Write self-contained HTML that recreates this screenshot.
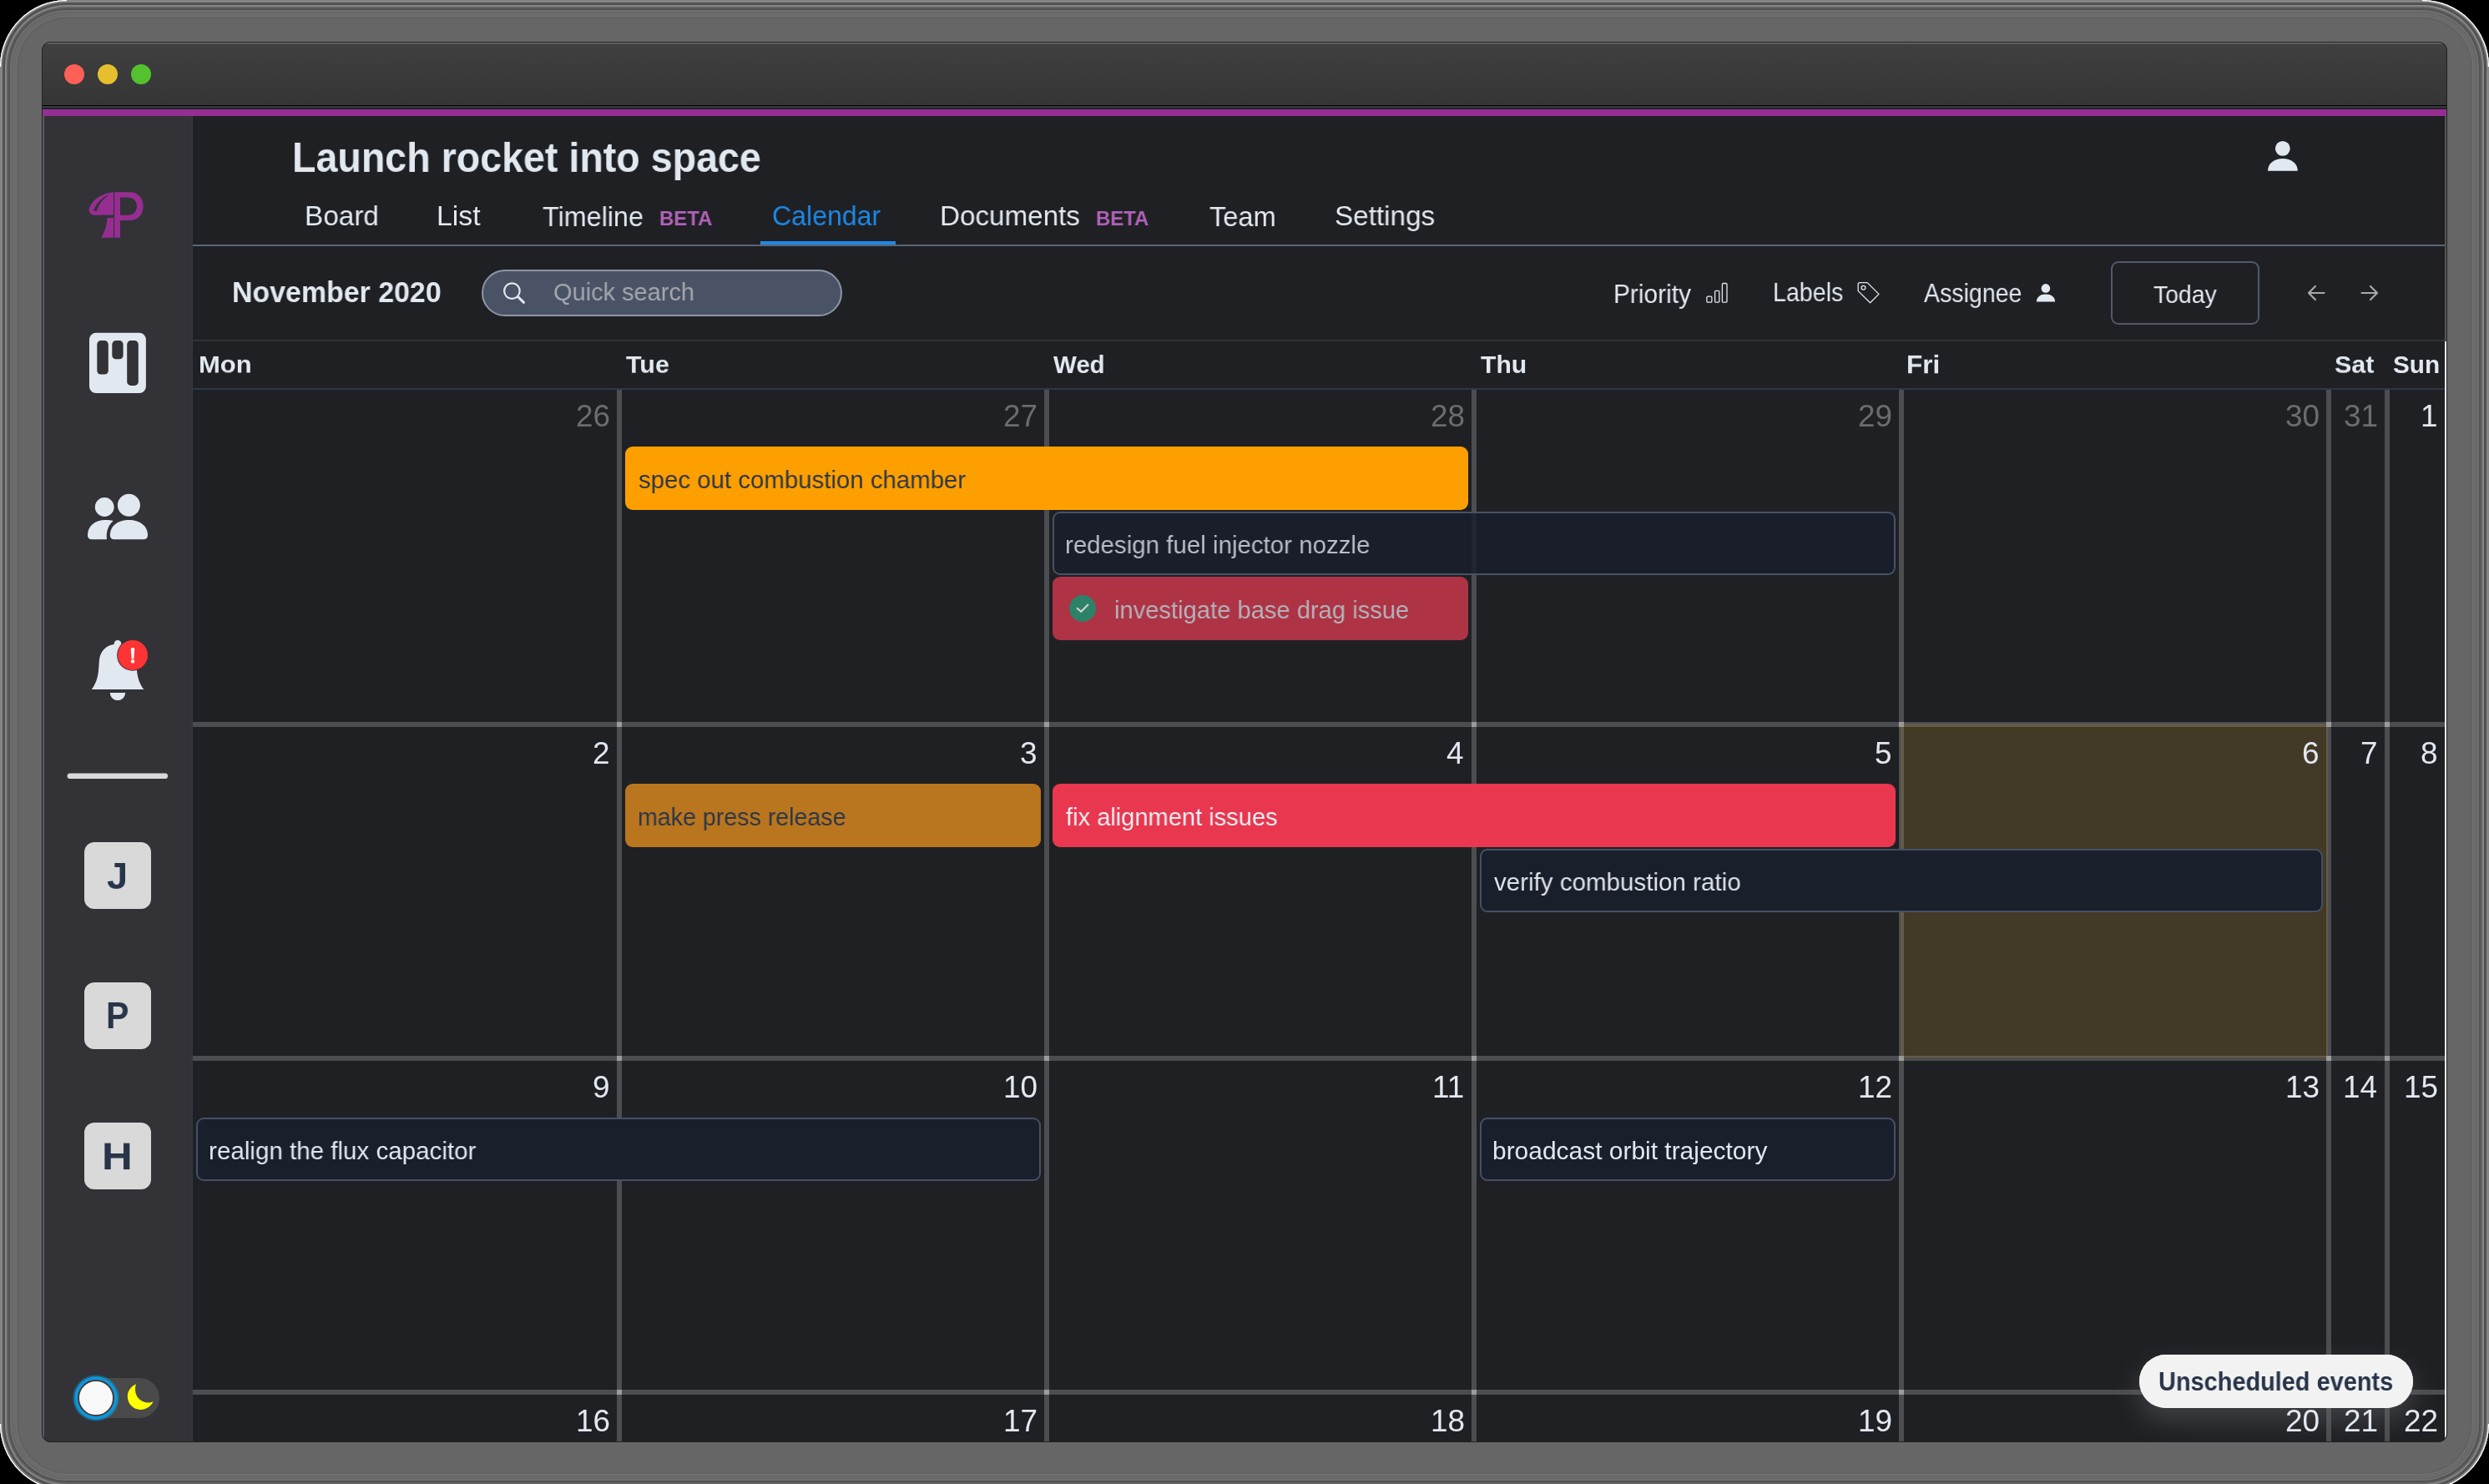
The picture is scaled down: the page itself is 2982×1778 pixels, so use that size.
<!DOCTYPE html>
<html><head><meta charset="utf-8"><style>
html,body{margin:0;padding:0;background:#000;width:2982px;height:1778px;overflow:hidden}
.b{position:absolute;box-sizing:border-box}
.t{position:absolute;white-space:pre;font-family:"Liberation Sans", sans-serif;transform-origin:0 0;z-index:2;will-change:transform}
</style></head><body>
<div class="b" style="left:0;top:0;width:2982px;height:1786px;border-radius:80px;background:#666;box-shadow:inset 0 0 0 3px #848484, inset 0 0 0 6px #525252, inset 0 0 0 8px #858585, inset 0 0 0 10px #636363, inset 0 0 0 12px #525252, inset 0 0 0 14.5px #6e6e6e, inset 0 0 0 15.5px #606060, inset 0 0 0 17.5px #6e6e6e, inset 0 0 0 18.5px #646464, inset 0 0 0 20px #727272, inset 0 0 0 23px #636363"></div><svg class="b" style="left:0;top:0;z-index:0" width="2982" height="1778" viewBox="0 0 2982 1778"><g fill="none" stroke="#ffffff" stroke-width="1.3"><path d="M0.6,80 A79.4,79.4 0 0 1 80,0.6"/><path d="M2902,0.6 A79.4,79.4 0 0 1 2981.4,80"/><path d="M0.6,1706 A79.4,79.4 0 0 0 80,1785.4"/><path d="M2981.4,1706 A79.4,79.4 0 0 1 2902,1785.4"/></g></svg><div class="b" style="left:50px;top:50px;width:2882px;height:1678px;border-radius:10px;background:#1f2024;border:1px solid #222;overflow:hidden"><div class="b" style="left:-51px;top:-51px;width:2982px;height:1778px"><div class="b" style="left:51px;top:51px;width:2880px;height:75px;background:linear-gradient(#404040,#353535)"></div><div class="b" style="left:51px;top:51px;width:2880px;height:1px;background:#6a6a6a"></div><div class="b" style="left:51px;top:52px;width:2880px;height:1px;background:#555"></div><div class="b" style="left:50px;top:126px;width:2882px;height:1px;background:#000"></div><div class="b" style="left:50px;top:127px;width:2882px;height:2px;background:#3a3b3f"></div><div class="b" style="left:50px;top:129px;width:2882px;height:2px;background:#222326"></div><div class="b" style="left:50px;top:131px;width:2882px;height:8px;background:#962e92"></div><div class="b" style="left:77px;top:77px;width:24px;height:24px;border-radius:50%;background:#fe5f57"></div><div class="b" style="left:117px;top:77px;width:24px;height:24px;border-radius:50%;background:#e6bf2e"></div><div class="b" style="left:157px;top:77px;width:24px;height:24px;border-radius:50%;background:#54c22f"></div><div class="b" style="left:50px;top:139px;width:179px;height:1589px;background:#323237"></div><div class="b" style="left:51px;top:139px;width:2px;height:1589px;background:#5c5b62"></div><div class="b" style="left:229px;top:139px;width:2px;height:1589px;background:#2d3748"></div><span class="t" style="left:350.34px;top:163.12px;font-size:48.20px;line-height:48.20px;font-weight:700;color:#e2e8f0;transform:scale(0.9668,1.0344);">Launch rocket into space</span><span class="t" style="left:365.33px;top:242.30px;font-size:33.55px;line-height:33.55px;font-weight:400;color:#e2e8f0;transform:scale(0.9935,1.0065);">Board</span><span class="t" style="left:522.99px;top:242.30px;font-size:33.82px;line-height:33.82px;font-weight:400;color:#e2e8f0;transform:scale(1.0016,0.9984);">List</span><span class="t" style="left:649.75px;top:242.30px;font-size:33.04px;line-height:33.04px;font-weight:400;color:#e2e8f0;transform:scale(0.9786,1.0219);">Timeline</span><span class="t" style="left:925.40px;top:242.30px;font-size:32.91px;line-height:32.91px;font-weight:400;color:#1e88e5;transform:scale(0.9747,1.0260);">Calendar</span><span class="t" style="left:1126.34px;top:242.30px;font-size:33.48px;line-height:33.48px;font-weight:400;color:#e2e8f0;transform:scale(0.9915,1.0085);">Documents</span><span class="t" style="left:1449.35px;top:242.30px;font-size:33.19px;line-height:33.19px;font-weight:400;color:#e2e8f0;transform:scale(0.9830,1.0173);">Team</span><span class="t" style="left:1598.84px;top:242.30px;font-size:33.53px;line-height:33.53px;font-weight:400;color:#e2e8f0;transform:scale(0.9928,1.0072);">Settings</span><span class="t" style="left:790.22px;top:250.06px;font-size:24.30px;line-height:24.30px;font-weight:700;color:#b062b8;transform:scale(0.9862,1.0140);">BETA</span><span class="t" style="left:1313.33px;top:250.06px;font-size:24.28px;line-height:24.28px;font-weight:700;color:#b062b8;transform:scale(0.9854,1.0149);">BETA</span><div class="b" style="left:231px;top:293px;width:2698px;height:2px;background:#5a6578"></div><div class="b" style="left:911px;top:289px;width:162px;height:4px;background:#1e88e5"></div><svg class="b" style="left:2700px;top:160px" width="60" height="50" viewBox="2700 160 60 50"><circle cx="2734.8" cy="177.9" r="8.9" fill="#e2e8f0"/><path d="M2717,204.7 C2717,195.5 2725,190 2734.9,190 C2744.8,190 2752.8,195.5 2752.8,204.7 Z" fill="#e2e8f0"/></svg><span class="t" style="left:277.62px;top:333.43px;font-size:34.35px;line-height:34.35px;font-weight:700;color:#e2e8f0;transform:scale(0.9876,1.0125);">November 2020</span><div class="b" style="left:577px;top:323px;width:432px;height:56px;background:#4a5366;border:2px solid #8e95a3;border-radius:28px;box-sizing:border-box"></div><svg class="b" style="left:590px;top:330px" width="50" height="45" viewBox="590 330 50 45"><circle cx="613.4" cy="348.6" r="9.3" fill="none" stroke="#e2e8f0" stroke-width="2.2"/><line x1="620.5" y1="355.5" x2="627.5" y2="362.3" stroke="#e2e8f0" stroke-width="3" stroke-linecap="round"/></svg><span class="t" style="left:662.85px;top:336.49px;font-size:29.19px;line-height:29.19px;font-weight:400;color:#a3a6ad;transform:scale(0.9923,1.0078);">Quick search</span><span class="t" style="left:1933.11px;top:335.51px;font-size:30.51px;line-height:30.51px;font-weight:400;color:#e2e8f0;transform:scale(0.9791,1.0214);">Priority</span><span class="t" style="left:2123.71px;top:335.33px;font-size:29.50px;line-height:29.50px;font-weight:400;color:#e2e8f0;transform:scale(0.9692,1.0318);">Labels</span><span class="t" style="left:2304.50px;top:335.51px;font-size:29.83px;line-height:29.83px;font-weight:400;color:#e2e8f0;transform:scale(0.9572,1.0447);">Assignee</span><svg class="b" style="left:2040px;top:334px" width="440" height="34" viewBox="2040 334 440 34"><g fill="none" stroke="#e2e8f0" stroke-width="1.3"><rect x="2044.9" y="355.2" width="6" height="7" rx="1.3"/><rect x="2054.6" y="348.3" width="5.2" height="13.9" rx="1.3"/><rect x="2063.4" y="339.5" width="5.6" height="22.7" rx="1.3"/><path d="M2226.2,340.6 Q2226.2,338.6 2228.2,338.6 L2237.2,338.6 L2251,352.4 L2240.6,362.8 L2226.2,348.6 Z" stroke-linejoin="round"/><circle cx="2232.5" cy="344.8" r="2.4"/></g><circle cx="2450.9" cy="345.4" r="5.3" fill="#e2e8f0"/><path d="M2439.9,361.5 C2439.9,356 2444.5,352.6 2451,352.6 C2457.5,352.6 2462.1,356 2462.1,361.5 Z" fill="#e2e8f0"/></svg><div class="b" style="left:2529px;top:313px;width:178px;height:76px;border:2px solid #4f5a6b;border-radius:9px;box-sizing:border-box"></div><span class="t" style="left:2580.33px;top:337.97px;font-size:28.98px;line-height:28.98px;font-weight:400;color:#e2e8f0;transform:scale(0.9804,1.0200);">Today</span><svg class="b" style="left:2755px;top:335px" width="105" height="32" viewBox="2755 335 105 32"><g fill="none" stroke="#a9a9a9" stroke-width="2.2" stroke-linecap="round" stroke-linejoin="round"><path d="M2784.5,351 L2766,351 M2773.9,343 L2766,351 L2773.9,359"/><path d="M2829.5,351 L2848,351 M2840,343 L2848,351 L2840,359"/></g></svg><div class="b" style="left:231px;top:407px;width:2698px;height:2px;background:#313236"></div><div class="b" style="left:231px;top:465px;width:2698px;height:2px;background:#2d3748"></div><span class="t" style="left:237.63px;top:422.25px;font-size:30.34px;line-height:30.34px;font-weight:700;color:#e2e8f0;transform:scale(1.0212,0.9792);">Mon</span><span class="t" style="left:750.10px;top:422.25px;font-size:30.09px;line-height:30.09px;font-weight:700;color:#e2e8f0;transform:scale(1.0129,0.9873);">Tue</span><span class="t" style="left:1262.20px;top:422.25px;font-size:29.58px;line-height:29.58px;font-weight:700;color:#e2e8f0;transform:scale(0.9957,1.0043);">Wed</span><span class="t" style="left:1773.70px;top:422.25px;font-size:29.91px;line-height:29.91px;font-weight:700;color:#e2e8f0;transform:scale(1.0068,0.9933);">Thu</span><span class="t" style="left:2283.79px;top:422.25px;font-size:30.63px;line-height:30.63px;font-weight:700;color:#e2e8f0;transform:scale(1.0310,0.9700);">Fri</span><span class="t" style="left:2796.68px;top:422.25px;font-size:30.12px;line-height:30.12px;font-weight:700;color:#e2e8f0;transform:scale(1.0137,0.9865);">Sat</span><span class="t" style="left:2866.61px;top:422.25px;font-size:29.72px;line-height:29.72px;font-weight:700;color:#e2e8f0;transform:scale(1.0002,0.9998);">Sun</span><div class="b" style="left:2277px;top:867px;width:512px;height:400px;background:rgba(178,140,52,0.24);z-index:2"></div><div class="b" style="left:739px;top:467px;width:6px;height:1261px;background:rgba(255,255,255,0.205)"></div><div class="b" style="left:1251px;top:467px;width:6px;height:1261px;background:rgba(255,255,255,0.205)"></div><div class="b" style="left:1763px;top:467px;width:6px;height:1261px;background:rgba(255,255,255,0.205)"></div><div class="b" style="left:2275px;top:467px;width:6px;height:1261px;background:rgba(255,255,255,0.205)"></div><div class="b" style="left:2787px;top:467px;width:6px;height:1261px;background:rgba(255,255,255,0.205)"></div><div class="b" style="left:2857px;top:467px;width:6px;height:1261px;background:rgba(255,255,255,0.205)"></div><div class="b" style="left:231px;top:865px;width:2698px;height:6px;background:rgba(255,255,255,0.205)"></div><div class="b" style="left:739px;top:865px;width:6px;height:6px;background:rgba(255,255,255,0.3)"></div><div class="b" style="left:1251px;top:865px;width:6px;height:6px;background:rgba(255,255,255,0.3)"></div><div class="b" style="left:1763px;top:865px;width:6px;height:6px;background:rgba(255,255,255,0.3)"></div><div class="b" style="left:2275px;top:865px;width:6px;height:6px;background:rgba(255,255,255,0.3)"></div><div class="b" style="left:2787px;top:865px;width:6px;height:6px;background:rgba(255,255,255,0.3)"></div><div class="b" style="left:2857px;top:865px;width:6px;height:6px;background:rgba(255,255,255,0.3)"></div><div class="b" style="left:231px;top:1265px;width:2698px;height:6px;background:rgba(255,255,255,0.205)"></div><div class="b" style="left:739px;top:1265px;width:6px;height:6px;background:rgba(255,255,255,0.3)"></div><div class="b" style="left:1251px;top:1265px;width:6px;height:6px;background:rgba(255,255,255,0.3)"></div><div class="b" style="left:1763px;top:1265px;width:6px;height:6px;background:rgba(255,255,255,0.3)"></div><div class="b" style="left:2275px;top:1265px;width:6px;height:6px;background:rgba(255,255,255,0.3)"></div><div class="b" style="left:2787px;top:1265px;width:6px;height:6px;background:rgba(255,255,255,0.3)"></div><div class="b" style="left:2857px;top:1265px;width:6px;height:6px;background:rgba(255,255,255,0.3)"></div><div class="b" style="left:231px;top:1665px;width:2698px;height:6px;background:rgba(255,255,255,0.205)"></div><div class="b" style="left:739px;top:1665px;width:6px;height:6px;background:rgba(255,255,255,0.3)"></div><div class="b" style="left:1251px;top:1665px;width:6px;height:6px;background:rgba(255,255,255,0.3)"></div><div class="b" style="left:1763px;top:1665px;width:6px;height:6px;background:rgba(255,255,255,0.3)"></div><div class="b" style="left:2275px;top:1665px;width:6px;height:6px;background:rgba(255,255,255,0.3)"></div><div class="b" style="left:2787px;top:1665px;width:6px;height:6px;background:rgba(255,255,255,0.3)"></div><div class="b" style="left:2857px;top:1665px;width:6px;height:6px;background:rgba(255,255,255,0.3)"></div><div class="b" style="left:2929px;top:409px;width:2px;height:1319px;background:#e8e8e8"></div><div class="b" style="left:2929px;top:139px;width:2px;height:270px;background:#555"></div><span class="t" style="left:689.52px;top:481.40px;font-size:36.90px;line-height:36.90px;font-weight:400;color:#6b6c71;transform:scale(1)">26</span><span class="t" style="left:1201.89px;top:481.40px;font-size:36.90px;line-height:36.90px;font-weight:400;color:#6b6c71;transform:scale(1)">27</span><span class="t" style="left:1713.52px;top:481.40px;font-size:36.90px;line-height:36.90px;font-weight:400;color:#6b6c71;transform:scale(1)">28</span><span class="t" style="left:2225.52px;top:481.40px;font-size:36.90px;line-height:36.90px;font-weight:400;color:#6b6c71;transform:scale(1)">29</span><span class="t" style="left:2737.52px;top:481.40px;font-size:36.90px;line-height:36.90px;font-weight:400;color:#6b6c71;transform:scale(1)">30</span><span class="t" style="left:2807.89px;top:481.40px;font-size:36.90px;line-height:36.90px;font-weight:400;color:#6b6c71;transform:scale(1)">31</span><span class="t" style="left:2900.18px;top:481.40px;font-size:36.90px;line-height:36.90px;font-weight:400;color:#e2e8f0;transform:scale(1)">1</span><span class="t" style="left:710.18px;top:885.40px;font-size:36.90px;line-height:36.90px;font-weight:400;color:#e2e8f0;transform:scale(1)">2</span><span class="t" style="left:1222.18px;top:885.40px;font-size:36.90px;line-height:36.90px;font-weight:400;color:#e2e8f0;transform:scale(1)">3</span><span class="t" style="left:1733.44px;top:885.40px;font-size:36.90px;line-height:36.90px;font-weight:400;color:#e2e8f0;transform:scale(1)">4</span><span class="t" style="left:2245.81px;top:885.40px;font-size:36.90px;line-height:36.90px;font-weight:400;color:#e2e8f0;transform:scale(1)">5</span><span class="t" style="left:2758.18px;top:885.40px;font-size:36.90px;line-height:36.90px;font-weight:400;color:#e2e8f0;transform:scale(1)">6</span><span class="t" style="left:2828.18px;top:885.40px;font-size:36.90px;line-height:36.90px;font-weight:400;color:#e2e8f0;transform:scale(1)">7</span><span class="t" style="left:2900.18px;top:885.40px;font-size:36.90px;line-height:36.90px;font-weight:400;color:#e2e8f0;transform:scale(1)">8</span><span class="t" style="left:710.18px;top:1285.40px;font-size:36.90px;line-height:36.90px;font-weight:400;color:#e2e8f0;transform:scale(1)">9</span><span class="t" style="left:1201.52px;top:1285.40px;font-size:36.90px;line-height:36.90px;font-weight:400;color:#e2e8f0;transform:scale(1)">10</span><span class="t" style="left:1716.47px;top:1285.40px;font-size:36.90px;line-height:36.90px;font-weight:400;color:#e2e8f0;transform:scale(1)">11</span><span class="t" style="left:2225.89px;top:1285.40px;font-size:36.90px;line-height:36.90px;font-weight:400;color:#e2e8f0;transform:scale(1)">12</span><span class="t" style="left:2737.52px;top:1285.40px;font-size:36.90px;line-height:36.90px;font-weight:400;color:#e2e8f0;transform:scale(1)">13</span><span class="t" style="left:2807.15px;top:1285.40px;font-size:36.90px;line-height:36.90px;font-weight:400;color:#e2e8f0;transform:scale(1)">14</span><span class="t" style="left:2879.52px;top:1285.40px;font-size:36.90px;line-height:36.90px;font-weight:400;color:#e2e8f0;transform:scale(1)">15</span><span class="t" style="left:689.52px;top:1685.40px;font-size:36.90px;line-height:36.90px;font-weight:400;color:#e2e8f0;transform:scale(1)">16</span><span class="t" style="left:1201.89px;top:1685.40px;font-size:36.90px;line-height:36.90px;font-weight:400;color:#e2e8f0;transform:scale(1)">17</span><span class="t" style="left:1713.52px;top:1685.40px;font-size:36.90px;line-height:36.90px;font-weight:400;color:#e2e8f0;transform:scale(1)">18</span><span class="t" style="left:2225.52px;top:1685.40px;font-size:36.90px;line-height:36.90px;font-weight:400;color:#e2e8f0;transform:scale(1)">19</span><span class="t" style="left:2737.52px;top:1685.40px;font-size:36.90px;line-height:36.90px;font-weight:400;color:#e2e8f0;transform:scale(1)">20</span><span class="t" style="left:2807.89px;top:1685.40px;font-size:36.90px;line-height:36.90px;font-weight:400;color:#e2e8f0;transform:scale(1)">21</span><span class="t" style="left:2879.89px;top:1685.40px;font-size:36.90px;line-height:36.90px;font-weight:400;color:#e2e8f0;transform:scale(1)">22</span><div class="b" style="left:749px;top:535px;width:1010px;height:76px;background:#fe9f00;border-radius:9px;z-index:3;"></div><span class="t" style="left:764.92px;top:559.62px;font-size:29.63px;line-height:29.63px;font-weight:400;color:#2d3748;transform:scale(0.9923,1.0077);z-index:5">spec out combustion chamber</span><div class="b" style="left:1261px;top:613px;width:1010px;height:76px;background:rgba(26,31,44,0.85);border-radius:9px;z-index:3;border:2px solid #485266;box-sizing:border-box;"></div><span class="t" style="left:1275.83px;top:637.62px;font-size:29.67px;line-height:29.67px;font-weight:400;color:#b9bdc5;transform:scale(0.9938,1.0062);z-index:5">redesign fuel injector nozzle</span><div class="b" style="left:1261px;top:691px;width:498px;height:76px;background:#ae3344;border-radius:9px;z-index:3;"></div><svg class="b" style="left:1281px;top:713px;z-index:4" width="32" height="32" viewBox="0 0 32 32"><circle cx="16" cy="16" r="16" fill="#2b8269"/><path d="M9,15.2 L14.2,19.8 L23,11" fill="none" stroke="#d6d6d6" stroke-width="2"/></svg><span class="t" style="left:1334.96px;top:715.62px;font-size:29.50px;line-height:29.50px;font-weight:400;color:#b3b3bb;transform:scale(0.9880,1.0122);z-index:5">investigate base drag issue</span><div class="b" style="left:749px;top:939px;width:498px;height:76px;background:#b9761e;border-radius:9px;z-index:3;"></div><span class="t" style="left:763.70px;top:963.62px;font-size:29.22px;line-height:29.22px;font-weight:400;color:#2d3748;transform:scale(0.9789,1.0216);z-index:5">make press release</span><div class="b" style="left:1261px;top:939px;width:1010px;height:76px;background:#e8374f;border-radius:9px;z-index:3;"></div><span class="t" style="left:1277.31px;top:963.62px;font-size:29.46px;line-height:29.46px;font-weight:400;color:#eceef2;transform:scale(0.9869,1.0133);z-index:5">fix alignment issues</span><div class="b" style="left:1773px;top:1017px;width:1010px;height:76px;background:#1a1f2c;border-radius:9px;z-index:3;border:2px solid #455064;box-sizing:border-box;"></div><span class="t" style="left:1790.30px;top:1041.62px;font-size:29.71px;line-height:29.71px;font-weight:400;color:#dfe3ea;transform:scale(0.9950,1.0050);z-index:5">verify combustion ratio</span><div class="b" style="left:235px;top:1339px;width:1012px;height:76px;background:#1a1f2c;border-radius:9px;z-index:3;border:2px solid #455064;box-sizing:border-box;"></div><span class="t" style="left:249.73px;top:1363.62px;font-size:29.71px;line-height:29.71px;font-weight:400;color:#e2e8f0;transform:scale(0.9953,1.0048);z-index:5">realign the flux capacitor</span><div class="b" style="left:1773px;top:1339px;width:498px;height:76px;background:#1a1f2c;border-radius:9px;z-index:3;border:2px solid #455064;box-sizing:border-box;"></div><span class="t" style="left:1788.20px;top:1363.62px;font-size:29.90px;line-height:29.90px;font-weight:400;color:#e2e8f0;transform:scale(1.0014,0.9986);z-index:5">broadcast orbit trajectory</span><div class="b" style="left:2563px;top:1623px;width:328px;height:64px;background:#f2f2f2;border-radius:32px;z-index:1;box-shadow:0 14px 30px 2px rgba(110,110,116,0.40)"></div><div class="b" style="left:2563px;top:1623px;width:328px;height:64px;background:#f2f2f2;border-radius:32px;z-index:6"></div><span class="t" style="left:2585.76px;top:1639.63px;font-size:29.67px;line-height:29.67px;font-weight:700;color:#283449;transform:scale(0.9748,1.0259);z-index:7">Unscheduled events</span><svg class="b" style="left:0;top:0;z-index:1" width="2982" height="1778" viewBox="0 0 2982 1778"><defs><filter id="blur1" x="-50%" y="-50%" width="200%" height="200%"><feGaussianBlur stdDeviation="1.2"/></filter></defs><g fill="#962e92"><path d="M137.1,230.2 L156,230.2 C165,230.2 171.6,237 171.6,247 C171.6,257 165,264 156,264 L144,264 L144,284.7 L137.1,284.7 Z M144,236.4 L144,257.8 L153,257.8 C159.5,257.8 164,253.5 164,247 C164,240.5 159.5,236.4 153,236.4 Z" fill-rule="evenodd"/><path d="M136,230.2 C124,230.5 112,238 107.5,248 C105.5,253 107.5,257.8 114,257.8 L136,257.4 Z M128.8,233.8 C120,238.5 114,245.5 112,252.7 L115.8,252.7 C118.5,245 122.5,239.5 129.3,234.6 Z" fill-rule="evenodd"/><path d="M128.5,260.9 L136,260.9 L136,284.7 L121.8,284.7 L121.8,283.5 C126,277 128,270 128.5,260.9 Z"/></g><rect x="107" y="398.8" width="67.9" height="72.2" rx="8" fill="#e2e8f0"/><g fill="#323237"><rect x="116.3" y="408.1" width="13.5" height="40.4" rx="4.5"/><rect x="134.3" y="408.1" width="13.3" height="22.2" rx="4.5"/><rect x="152.2" y="408.1" width="13.6" height="53.8" rx="4.5"/></g><g fill="#e2e8f0"><circle cx="125.2" cy="607.5" r="11.4"/><circle cx="154.4" cy="605.3" r="13.5"/><path d="M131.8,641.5 C131.8,630 141.5,623.1 154.4,623.1 C167.3,623.1 177,630 177,641.5 C177,644.5 175,646.2 172,646.2 L136.8,646.2 C133.8,646.2 131.8,644.5 131.8,641.5 Z"/><path d="M105,641.5 C105,630 114,623.1 126,623.1 C130,623.1 133,623.4 135.7,624 C130,629 127,636 127.9,646.2 L110,646.2 C107,646.2 105,644.5 105,641.5 Z"/></g><g fill="#e2e8f0"><circle cx="141" cy="771.2" r="4.3"/><path d="M141,771.5 C128,771.5 119.5,780 118.8,792 L118.2,801 C117.5,812 114.5,820 109.7,826 L172.3,826 C167.5,820 164.5,812 163.8,801 L163.2,792 C162.5,780 154,771.5 141,771.5 Z"/><path d="M131.8,829.9 L150.1,829.9 C150.1,835 146,839 141,839 C136,839 131.8,835 131.8,829.9 Z"/></g><circle cx="159" cy="784.9" r="18.9" fill="#323237"/><circle cx="159" cy="784.9" r="18" fill="#ff3333"/><path d="M156.8,777.5 Q156.8,776 159,776 Q161.2,776 161.2,777.5 L160.4,789.4 L157.6,789.4 Z" fill="#fff"/><circle cx="159" cy="792.4" r="2.2" fill="#fff"/><rect x="80.6" y="926.5" width="120.4" height="6.5" rx="3" fill="#d9d9d9"/><rect x="101" y="1009" width="80" height="80" rx="12" fill="#d9d9d9"/><rect x="101" y="1177" width="80" height="80" rx="12" fill="#d9d9d9"/><rect x="101" y="1345" width="80" height="80" rx="12" fill="#d9d9d9"/><rect x="100" y="1651" width="91" height="48" rx="24" fill="#4a4a4a"/><circle cx="115" cy="1675" r="26.6" fill="#0b98dc" filter="url(#blur1)"/><circle cx="115" cy="1675" r="21" fill="#f9f9f9" stroke="#443c3c" stroke-width="2"/><path d="M162.9,1658.3 C157,1661 152.8,1666.5 152.8,1673 C152.8,1681.8 159.8,1688.9 168.3,1688.9 C175,1688.9 181,1685 183.6,1679.3 C181.5,1680.2 179.5,1680.5 177.5,1680.5 C169,1680.5 162,1673.5 162,1665 C162,1662.5 162.3,1660.5 162.9,1658.3 Z" fill="#ffff00"/></svg><span class="t" style="left:127.60px;top:1026.81px;font-size:45.02px;line-height:45.02px;font-weight:700;color:#283449;transform:scale(1.0020,0.9980);z-index:2">J</span><span class="t" style="left:127.12px;top:1194.95px;font-size:42.54px;line-height:42.54px;font-weight:700;color:#283449;transform:scale(0.9655,1.0357);z-index:2">P</span><span class="t" style="left:122.44px;top:1362.03px;font-size:48.41px;line-height:48.41px;font-weight:700;color:#283449;transform:scale(1.0504,0.9520);z-index:2">H</span></div></div>
</body></html>
